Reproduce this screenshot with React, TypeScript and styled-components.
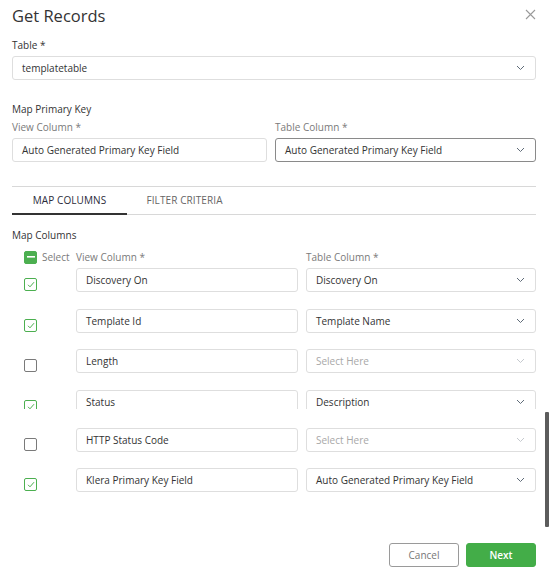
import React from 'react'
import styled, { createGlobalStyle } from 'styled-components'

const GlobalStyle = createGlobalStyle`
  html, body {
    margin: 0;
    padding: 0;
    background: #fff;
  }
  body {
    font-family: "Open Sans", "Noto Sans", sans-serif;
    color: #333;
  }
`

const Dialog = styled.div`
  position: relative;
  width: 558px;
  height: 572px;
  box-sizing: border-box;
  padding: 0 22px 0 12px;
  background: #fff;
  overflow: hidden;
`

const Header = styled.div`
  display: flex;
  justify-content: space-between;
  align-items: center;
  height: 30px;
`

const Title = styled.h1`
  margin: 0;
  font-size: 16.5px;
  font-weight: 400;
  color: #333;
`

const Close = styled.button`
  border: 0;
  background: none;
  padding: 0;
  margin-right: -1px;
  width: 12px;
  height: 12px;
  display: flex;
  cursor: pointer;
`

const Label = styled.div<{ $muted?: boolean; $top?: number }>`
  font-size: 10px;
  line-height: 14px;
  color: ${p => (p.$muted ? '#7a7a7a' : '#333')};
  margin-top: ${p => p.$top ?? 0}px;
  margin-bottom: 4px;
`

const Field = styled.div<{ $dark?: boolean; $placeholder?: boolean }>`
  height: 24px;
  box-sizing: border-box;
  border: 1px solid ${p => (p.$dark ? '#8a8a8a' : '#dedede')};
  border-radius: 3px;
  display: flex;
  align-items: center;
  justify-content: space-between;
  padding: 0 10px 0 9px;
  font-size: 10px;
  color: ${p => (p.$placeholder ? '#a8a8a8' : '#333')};
  background: #fff;
`

const PairRow = styled.div`
  display: grid;
  grid-template-columns: 255px 261px;
  column-gap: 8px;
`

const Divider = styled.div`
  height: 1px;
  background: #d8d8d8;
  margin-top: 24px;
`

const Tabs = styled.div`
  display: flex;
  border-bottom: 1px solid #d8d8d8;
`

const Tab = styled.div<{ $active?: boolean }>`
  width: 115px;
  height: 28px;
  box-sizing: border-box;
  display: flex;
  align-items: center;
  justify-content: center;
  font-size: 10px;
  letter-spacing: 0.1px;
  color: ${p => (p.$active ? '#2b2b3a' : '#666')};
  border-bottom: 2px solid ${p => (p.$active ? '#333' : 'transparent')};
  margin-bottom: -1px;
`

const ColHeader = styled.div`
  display: grid;
  grid-template-columns: 30px 34px 230px 230px;
  align-items: center;
  margin-top: 8px;
  font-size: 10px;
  color: #7a7a7a;
  height: 14px;
`

const Rows = styled.div`
  margin-top: 4px;
  display: flex;
  flex-direction: column;
`

const MapRow = styled.div<{ $clip?: boolean }>`
  display: grid;
  grid-template-columns: 56px 222px 230px;
  column-gap: 8px;
  align-items: start;
  height: ${p => (p.$clip ? '19px' : '24px')};
  overflow: ${p => (p.$clip ? 'hidden' : 'visible')};
  margin-top: 16.7px;
  margin-bottom: ${p => (p.$clip ? '2px' : '0')};
  &:first-of-type {
    margin-top: 0;
  }
`

const Check = styled.span<{ $on?: boolean; $mixed?: boolean }>`
  width: 13px;
  height: 13px;
  box-sizing: border-box;
  margin: 10px 0 0 12px;
  border: 1px solid ${p => (p.$on || p.$mixed ? '#4caf50' : '#7a7a7a')};
  background: ${p => (p.$mixed ? '#4caf50' : '#fff')};
  border-radius: 2px;
  display: flex;
  align-items: center;
  justify-content: center;
`

const HeadCheck = styled(Check)`
  margin: 0 0 0 12px;
`

const HeadText = styled.span`
  white-space: nowrap;
`

const Footer = styled.div`
  display: flex;
  justify-content: flex-end;
  gap: 7px;
  margin-top: 51px;
`

const Button = styled.button<{ $primary?: boolean }>`
  width: 70px;
  height: 24px;
  box-sizing: border-box;
  border-radius: 3px;
  font-family: inherit;
  font-size: 10px;
  border: 1px solid ${p => (p.$primary ? '#43ad48' : '#9a9a9a')};
  background: ${p => (p.$primary ? '#43ad48' : '#fff')};
  color: ${p => (p.$primary ? '#fff' : '#777')};
  font-weight: ${p => (p.$primary ? 600 : 400)};
`

const Scrollbar = styled.div`
  position: absolute;
  left: 545px;
  top: 412px;
  width: 4px;
  height: 115px;
  background: #5c5c5c;
  border-radius: 1px;
`

const Chevron = ({ light }: { light?: boolean }) => (
  <svg width="9" height="6" viewBox="0 0 9 6">
    <path d="M1 1l3.5 3.5L8 1" fill="none" stroke={light ? '#c5c9ce' : '#5f6b78'} strokeWidth="1" />
  </svg>
)

const Tick = () => (
  <svg width="8" height="7" viewBox="0 0 8 7">
    <path d="M1 3.8l2 2L7 1.2" fill="none" stroke="#4caf50" strokeWidth="1" />
  </svg>
)

const Dash = () => (
  <svg width="8" height="2" viewBox="0 0 8 2">
    <rect x="0" y="0" width="8" height="1.6" fill="#fff" />
  </svg>
)

type Mapping = { on: boolean; view: string; table?: string }

const mappings: Mapping[] = [
  { on: true, view: 'Discovery On', table: 'Discovery On' },
  { on: true, view: 'Template Id', table: 'Template Name' },
  { on: false, view: 'Length' },
  { on: true, view: 'Status', table: 'Description' },
  { on: false, view: 'HTTP Status Code' },
  { on: true, view: 'Klera Primary Key Field', table: 'Auto Generated Primary Key Field' },
]

export default function App() {
  return (
    <>
      <GlobalStyle />
      <Dialog>
        <Header>
          <Title>Get Records</Title>
          <Close aria-label="close">
            <svg width="11" height="11" viewBox="0 0 11 11">
              <path d="M1 1l9 9M10 1l-9 9" stroke="#9a9a9a" strokeWidth="1.1" />
            </svg>
          </Close>
        </Header>

        <Label $top={8}>Table *</Label>
        <Field>
          templatetable
          <Chevron />
        </Field>

        <Label $top={22}>Map Primary Key</Label>
        <PairRow>
          <div>
            <Label $muted>View Column *</Label>
            <Field>Auto Generated Primary Key Field</Field>
          </div>
          <div>
            <Label $muted>Table Column *</Label>
            <Field $dark>
              Auto Generated Primary Key Field
              <Chevron />
            </Field>
          </div>
        </PairRow>

        <Divider />
        <Tabs>
          <Tab $active>MAP COLUMNS</Tab>
          <Tab>FILTER CRITERIA</Tab>
        </Tabs>

        <Label $top={13}>Map Columns</Label>
        <ColHeader>
          <HeadCheck $mixed>
            <Dash />
          </HeadCheck>
          <HeadText>Select</HeadText>
          <HeadText>View Column *</HeadText>
          <HeadText>Table Column *</HeadText>
        </ColHeader>

        <Rows>
          {mappings.map((m, i) => (
            <MapRow key={i} $clip={m.view === 'Status'}>
              <Check $on={m.on}>{m.on && <Tick />}</Check>
              <Field>{m.view}</Field>
              <Field $placeholder={!m.table}>
                {m.table ?? 'Select Here'}
                <Chevron light={!m.table} />
              </Field>
            </MapRow>
          ))}
        </Rows>

        <Footer>
          <Button>Cancel</Button>
          <Button $primary>Next</Button>
        </Footer>
        <Scrollbar />
      </Dialog>
    </>
  )
}
